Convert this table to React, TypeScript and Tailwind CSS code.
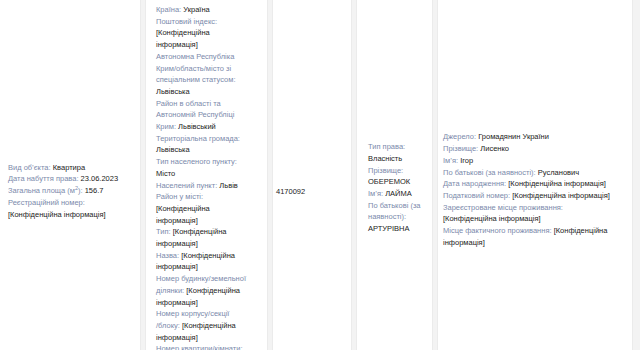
import React from 'react';

type Item = { label?: React.ReactNode; value?: React.ReactNode };

const Label: React.FC<{ children: React.ReactNode }> = ({ children }) => (
  <span className="text-[#7b8aab]">{children}</span>
);

const Value: React.FC<{ children: React.ReactNode }> = ({ children }) => (
  <span className="text-[#222]">{children}</span>
);

const Field: React.FC<Item> = ({ label, value }) => (
  <div>
    {label && <Label>{label}</Label>}
    {label && value && ' '}
    {value && <Value>{value}</Value>}
  </div>
);

const secret = '[Конфіденційна інформація]';

const objectInfo: Item[] = [
  { label: 'Вид об’єкта:', value: 'Квартира' },
  { label: 'Дата набуття права:', value: '23.06.2023' },
  {
    label: (
      <>
        Загальна площа (м<sup className="text-[5.5px] leading-none">2</sup>):
      </>
    ),
    value: '156.7'
  },
  { label: 'Реєстраційний номер:' },
  { value: secret }
];

const address: Item[] = [
  { label: 'Країна:', value: 'Україна' },
  { label: 'Поштовий індекс:' },
  { value: secret },
  { label: 'Автономна Республіка Крим/область/місто зі спеціальним статусом:' },
  { value: 'Львівська' },
  { label: 'Район в області та Автономній Республіці Крим:', value: 'Львівський' },
  { label: 'Територіальна громада:' },
  { value: 'Львівська' },
  { label: 'Тип населеного пункту:' },
  { value: 'Місто' },
  { label: 'Населений пункт:', value: 'Львів' },
  { label: 'Район у місті:' },
  { value: secret },
  { label: 'Тип:', value: secret },
  { label: 'Назва:', value: secret },
  { label: 'Номер будинку/земельної ділянки:', value: secret },
  {
    label: (
      <>
        Номер корпусу/секції <span className="whitespace-nowrap">/блоку:</span>
      </>
    ),
    value: secret
  },
  { label: 'Номер квартири/кімнати:', value: secret }
];

const rightType: Item[] = [
  { label: 'Тип права:' },
  { value: 'Власність' },
  { label: 'Прізвище:' },
  { value: 'ОБЕРЕМОК' },
  { label: 'Ім’я:', value: 'ЛАЙМА' },
  { label: 'По батькові (за наявності):' },
  { value: 'АРТУРІВНА' }
];

const owner: Item[] = [
  { label: 'Джерело:', value: 'Громадянин України' },
  { label: 'Прізвище:', value: 'Лисенко' },
  { label: 'Ім’я:', value: 'Ігор' },
  { label: 'По батькові (за наявності):', value: 'Русланович' },
  { label: 'Дата народження:', value: secret },
  { label: 'Податковий номер:', value: secret },
  { label: 'Зареєстроване місце проживання:' },
  { value: secret },
  { label: 'Місце фактичного проживання:', value: secret }
];

const App: React.FC = () => {
  return (
    <div className="w-[640px] h-[350px] overflow-hidden bg-[#f3f3f3] font-['Liberation_Sans',Arial,sans-serif] text-[7.5px] leading-[11.7px]">
      <div className="grid grid-cols-[141px_123px_80px_77px_196px] gap-x-[4px] h-[380px]">
        <div className="bg-white border-r border-[#ebebeb] flex flex-col justify-center pl-[8px] pr-[6px] pt-[2px]">
          {objectInfo.map((f, i) => (
            <Field key={i} {...f} />
          ))}
        </div>

        <div className="bg-white border-x border-[#ebebeb] pl-[10px] pr-[18px] pt-[4px]">
          {address.map((f, i) => (
            <Field key={i} {...f} />
          ))}
        </div>

        <div className="bg-white border-x border-[#ebebeb] flex flex-col justify-center pl-[3px] pt-[4px]">
          <Value>4170092</Value>
        </div>

        <div className="bg-white border-x border-[#ebebeb] flex flex-col justify-center pl-[11px] pr-[10px] pb-[4px]">
          {rightType.map((f, i) => (
            <Field key={i} {...f} />
          ))}
        </div>

        <div className="bg-white border-x border-[#ebebeb] flex flex-col justify-center pl-[5px] pr-[16px]">
          {owner.map((f, i) => (
            <Field key={i} {...f} />
          ))}
        </div>
      </div>
    </div>
  );
};

export default App;
